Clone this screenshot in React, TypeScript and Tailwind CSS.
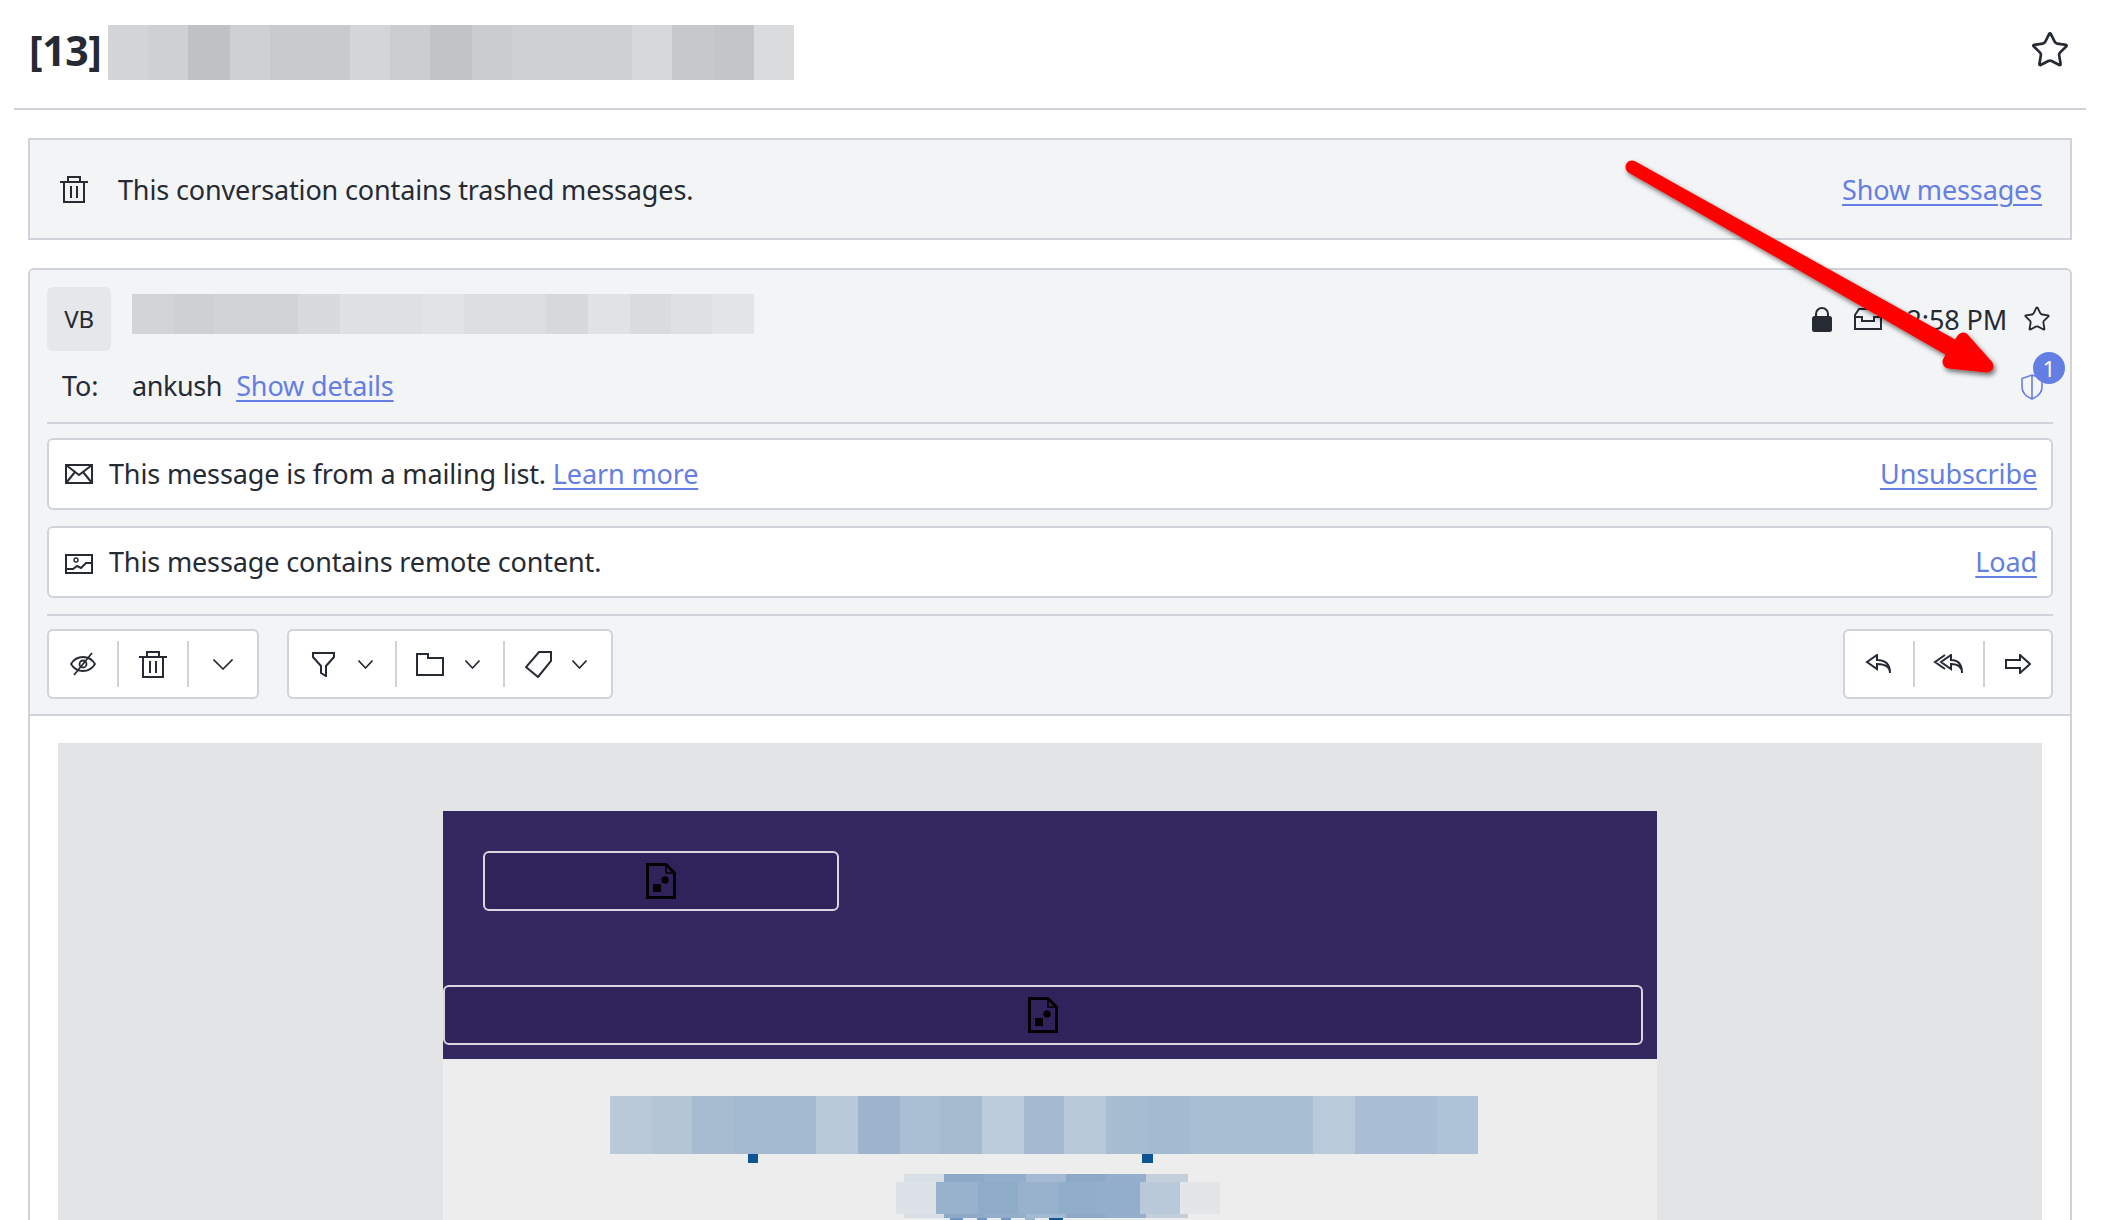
import React from "react";
import { Star } from "lucide-react";

type Seg = [number, string];

const TITLE_SEGS: Seg[] = [
  [40, "#d3d4d6"], [40, "#cfd0d2"], [42, "#c0c1c5"], [40, "#cfd0d2"], [80, "#c9cacc"], [40, "#d4d5d7"], [40, "#cccdcf"],
  [42, "#c2c3c7"], [40, "#cbcccd"], [120, "#cfd0d2"], [40, "#d7d8da"], [42, "#c7c8ca"], [40, "#c4c5c7"], [40, "#dadbdd"],
];
const SENDER_SEGS: Seg[] = [
  [42, "#d3d4d8"], [40, "#cfd0d3"], [84, "#d2d3d7"], [42, "#d9dade"], [82, "#dfe0e4"], [42, "#e2e3e7"],
  [82, "#dcdde1"], [42, "#d7d8dc"], [42, "#e1e2e6"], [41, "#dadbdf"], [41, "#dfe0e4"], [42, "#e3e4e7"],
];
const LINE_SEGS: Seg[] = [
  [42, "#b9c9d9"], [40, "#b3c6d6"], [43, "#a7bcd1"], [81, "#a3b9d0"], [42, "#b8c9d9"], [42, "#9eb4cc"], [40, "#aabfd3"],
  [42, "#a7bbd0"], [42, "#bdccda"], [40, "#a5bad0"], [42, "#b8c9d9"], [42, "#a7bdd2"], [42, "#a3bad0"], [123, "#a8bed3"],
  [42, "#b9cada"], [82, "#a9bed4"], [41, "#aec3d8"],
];
const OUTER_SEGS: Seg[] = [
  [40, "#d8dfe7"], [40, "#8ca9c7"], [42, "#93aecb"], [40, "#a3bad2"], [40, "#8ea9c7"], [40, "#94aecb"], [42, "#c3d0dc"],
];
const INNER_SEGS: Seg[] = [
  [40, "#dce2e8"], [42, "#98b1cc"], [40, "#8eacc8"], [40, "#98b2cd"], [40, "#90adc9"], [42, "#93aeca"], [40, "#b9c9d9"], [40, "#e3e5e9"],
];

const FONT = "font-['Noto_Sans',sans-serif]";

function Blur({ segs, className }: { segs: Seg[]; className: string }) {
  return (
    <div className={`flex ${className}`}>
      {segs.map(([w, c], i) => (
        <div key={i} style={{ width: w, backgroundColor: c }} />
      ))}
    </div>
  );
}

function A({ children }: { children: React.ReactNode }) {
  return <a className="text-[#657ee4] underline decoration-2 underline-offset-[4px]">{children}</a>;
}

const TrashIcon = () => (
  <svg width="28" height="27" viewBox="0 0 28 27" fill="none" stroke="#262a33" strokeWidth="2" className="shrink-0">
    <path d="M0 6h28M8 6V1h12v5M4 6V26h20V6M11 10v12M17 10v12" />
  </svg>
);

function Chevron({ w = 15, h = 9 }: { w?: number; h?: number }) {
  return (
    <svg width={w} height={h} viewBox={`0 0 ${w} ${h}`} fill="none" stroke="#262a33" strokeWidth="1.6" className="shrink-0">
      <path d={`M0.5 0.5 ${w / 2} ${h - 1} ${w - 0.5} 0.5`} />
    </svg>
  );
}

function BrokenImage() {
  return (
    <svg width="30" height="36" viewBox="0 0 30 36" fill="none" className="shrink-0">
      <path d="M1.5 1.5H20L28.5 10V34.5H1.5Z" stroke="#000" strokeWidth="3" />
      <path d="M20 1.5V10H28.5" stroke="#000" strokeWidth="1.5" />
      <rect x="7" y="21" width="8" height="8" fill="#000" />
      <ellipse cx="19" cy="17" rx="3.6" ry="3.8" fill="#000" />
    </svg>
  );
}

function Sep() {
  return <div className="w-[2px] h-[46px] bg-[#d1d3da] shrink-0" />;
}

function Banner({ icon, text, link, action, className }: { icon: React.ReactNode; text: string; link?: string; action: string; className?: string }) {
  return (
    <div className={`h-[72px] flex items-center bg-white border-2 border-[#d1d3da] rounded-[6px] pl-[16px] pr-[14px] ${className ?? ""}`}>
      {icon}
      <span className="ml-[16px] -mt-[2px]">
        {text} {link && <A>{link}</A>}
      </span>
      <span className="ml-auto -mt-[2px]">
        <A>{action}</A>
      </span>
    </div>
  );
}

function Arrow() {
  return (
    <svg width="2102" height="1220" className="absolute inset-0 pointer-events-none">
      <defs>
        <filter id="sh" x="-10%" y="-10%" width="120%" height="120%">
          <feDropShadow dx="2" dy="3" stdDeviation="2.5" floodColor="#000" floodOpacity="0.55" />
        </filter>
      </defs>
      <path
        d="M1632 167 L1957 348 L1963 339 L1987 366 L1949 362 L1954 352 Z"
        fill="#ff0000"
        stroke="#ff0000"
        strokeWidth="13"
        strokeLinejoin="round"
        filter="url(#sh)"
      />
    </svg>
  );
}

export default function App() {
  return (
    <div className={`relative w-[2102px] h-[1220px] overflow-hidden bg-white text-[#262a33] text-[27px] tracking-[-0.14px] leading-none ${FONT}`}>
      <header className="ml-[14px] mr-[16px] h-[110px] border-b-2 border-[#d1d3da] flex items-start pl-[15px] pr-[16px] pt-[25px]">
        <h1 className="w-[79px] text-[41px] tracking-[-0.4px] font-bold h-[50px] flex items-center whitespace-nowrap">[13]</h1>
        <Blur segs={TITLE_SEGS} className="h-[55px]" />
        <Star size={40} strokeWidth={1.6} className="ml-auto mt-[5px] text-[#262a33]" />
      </header>

      <main className="pl-[28px] pr-[30px] pt-[28px]">
        <div className="h-[102px] flex items-center bg-[#f2f4f6] border-2 border-[#d1d3da] pl-[30px] pr-[28px]">
          <TrashIcon />
          <span className="ml-[30px]">This conversation contains trashed messages.</span>
          <span className="ml-auto">
            <A>Show messages</A>
          </span>
        </div>

        <article className="mt-[28px] border-2 border-[#d1d3da] rounded-[6px] overflow-hidden">
          <div className="bg-[#f2f4f6] border-b-2 border-[#d1d3da]">
            <div className="px-[17px] pt-[17px]">
              <div className="flex h-[64px]">
                <div className="w-[64px] h-[64px] rounded-[6px] bg-[#e5e7eb] flex items-center justify-center text-[24px]">VB</div>
                <Blur segs={SENDER_SEGS} className="ml-[21px] mt-[7px] h-[40px]" />
                <div className="ml-auto flex items-center h-[64px] pr-[2px]">
                  <svg width="20" height="26" viewBox="0 0 20 26" fill="none" className="shrink-0">
                    <path d="M4 11V8a6 6 0 0 1 12 0v3" stroke="#262a33" strokeWidth="2" />
                    <rect x="0" y="10" width="20" height="16" rx="2.5" fill="#262a33" />
                  </svg>
                  <svg width="28" height="22" viewBox="0 0 28 22" fill="none" stroke="#262a33" strokeWidth="2" className="shrink-0 ml-[22px]">
                    <path d="M1 21V7L5 1H23L27 7V21ZM1 9H8V13H20V9H27" />
                  </svg>
                  <span className="ml-[25px]">2:58 PM</span>
                  <Star size={28} strokeWidth={1.6} className="ml-[16px]" />
                </div>
              </div>
              <div className="h-[73px] flex items-center border-b-2 border-[#d1d3da]">
                <span className="w-[85px] pl-[15px] -mt-[2px]">To:</span>
                <span className="-mt-[2px] tracking-[-0.4px]">ankush</span>
                <span className="ml-[14px] -mt-[2px]">
                  <A>Show details</A>
                </span>
                <div className="relative ml-auto mr-[10px] w-[22px] h-[26px]">
                  <svg width="22" height="26" viewBox="0 0 22 26" fill="none" stroke="#657ee4" strokeWidth="1.6">
                    <path d="M11 1 L21 4.5 V13 C21 19 16 23 11 25 C6 23 1 19 1 13 V4.5 Z M11 1 V25" />
                  </svg>
                  <div className="absolute -top-[22px] left-[12px] w-[32px] h-[32px] rounded-full bg-[#657ee4] text-white text-[22px] flex items-center justify-center">1</div>
                </div>
              </div>

              <Banner
                className="mt-[14px]"
                icon={
                  <svg width="28" height="20" viewBox="0 0 28 20" fill="none" stroke="#262a33" strokeWidth="2" className="shrink-0">
                    <path d="M1 1H27V19H1ZM1 1 14 11 27 1M1 19 10 8M27 19 18 8" />
                  </svg>
                }
                text="This message is from a mailing list."
                link="Learn more"
                action="Unsubscribe"
              />
              <Banner
                className="mt-[16px]"
                icon={
                  <svg width="28" height="20" viewBox="0 0 28 20" fill="none" stroke="#262a33" strokeWidth="2" className="shrink-0 mt-[4px]">
                    <path d="M1 1H27V19H1ZM1 15H8L12 12 16 14 21 9H27" />
                    <circle cx="11" cy="6" r="2" strokeWidth="1.4" />
                  </svg>
                }
                text="This message contains remote content."
                action="Load"
              />

              <div className="mt-[16px] border-t-2 border-[#d1d3da] pt-[13px] pb-[15px] flex">
                <div className="h-[70px] flex items-center bg-white border-2 border-[#d1d3da] rounded-[6px]">
                  <div className="w-[68px] flex justify-center">
                    <svg width="26" height="24" viewBox="0 0 26 24" fill="none" stroke="#262a33" strokeWidth="1.8">
                      <path d="M1 12C4 7 8 5 13 5s9 2 12 7c-3 5-7 7-12 7S4 17 1 12Z" />
                      <circle cx="13" cy="12" r="3.5" />
                      <path d="M22 1 4 23" />
                    </svg>
                  </div>
                  <Sep />
                  <div className="w-[68px] flex justify-center">
                    <TrashIcon />
                  </div>
                  <Sep />
                  <div className="w-[68px] flex justify-center">
                    <Chevron w={20} h={11} />
                  </div>
                </div>

                <div className="ml-[28px] h-[70px] flex items-center bg-white border-2 border-[#d1d3da] rounded-[6px]">
                  <div className="w-[106px] flex items-center pl-[23px] gap-[23px]">
                    <svg width="23" height="25" viewBox="0 0 23 25" fill="none" stroke="#262a33" strokeWidth="2" className="shrink-0">
                      <path d="M1 1H22V5L14 14V24L9 21V14L1 5Z" />
                    </svg>
                    <Chevron />
                  </div>
                  <Sep />
                  <div className="w-[106px] flex items-center pl-[19px] gap-[21px]">
                    <svg width="28" height="23" viewBox="0 0 28 23" fill="none" stroke="#262a33" strokeWidth="2" className="shrink-0">
                      <path d="M1 1H12V5H27V22H1Z" />
                    </svg>
                    <Chevron />
                  </div>
                  <Sep />
                  <div className="w-[106px] flex items-center pl-[20px] gap-[20px]">
                    <svg width="27" height="28" viewBox="0 0 27 28" fill="none" stroke="#262a33" strokeWidth="2" className="shrink-0">
                      <path d="M14 2H26V11L13 27 1 17Z" />
                    </svg>
                    <Chevron />
                  </div>
                </div>

                <div className="ml-auto h-[70px] flex items-center bg-white border-2 border-[#d1d3da] rounded-[6px]">
                  <div className="w-[68px] flex justify-center pr-[3px]">
                    <svg width="26" height="20" viewBox="0 0 26 20" fill="none" stroke="#262a33" strokeWidth="2">
                      <path d="M25 19C25 13 21 10 12 10V15L2 8 12 1V6C20 6 25 10 25 19Z" />
                    </svg>
                  </div>
                  <Sep />
                  <div className="w-[68px] flex justify-center pr-[3px]">
                    <svg width="30" height="20" viewBox="0 0 30 20" fill="none" stroke="#262a33" strokeWidth="2">
                      <path d="M29 19C29 13 25 10 18 10V15L8 8 18 1V6C25 6 29 10 29 19ZM12 1 2 8 12 15" />
                    </svg>
                  </div>
                  <Sep />
                  <div className="w-[66px] flex justify-center">
                    <svg width="26" height="20" viewBox="0 0 26 20" fill="none" stroke="#262a33" strokeWidth="2">
                      <path d="M1 6H15V1L25 10 15 19V14H1Z" />
                    </svg>
                  </div>
                </div>
              </div>
            </div>
          </div>

          <div className="bg-white pt-[27px] pl-[28px] pr-[28px]">
            <div className="bg-[#e3e4e6] pt-[68px] px-[385px] h-[600px]">
              <div className="h-[248px] bg-[#342860] pt-[40px] pl-[40px]">
                <div className="w-[356px] h-[60px] bg-[#30225a] border-2 border-[#d9d6e0] rounded-[6px] flex items-center justify-center">
                  <BrokenImage />
                </div>
                <div className="mt-[74px] -ml-[40px] w-[1200px] h-[60px] bg-[#30225a] border-2 border-[#d9d6e0] rounded-[6px] flex items-center justify-center">
                  <BrokenImage />
                </div>
              </div>
              <div className="bg-[#ededed] h-[300px] pt-[37px] pl-[167px]">
                <Blur segs={LINE_SEGS} className="h-[58px]" />
                <div className="flex h-[9px]">
                  <div className="ml-[138px] w-[10px] bg-[#0b5596]" />
                  <div className="ml-[384px] w-[11px] bg-[#0b5596]" />
                </div>
                <div className="relative ml-[294px] mt-[11px] w-[284px] h-[44px]">
                  <Blur segs={OUTER_SEGS} className="h-[44px]" />
                  <Blur segs={INNER_SEGS} className="absolute top-[8px] -left-[8px] h-[32px]" />
                </div>
                <div className="ml-[340px] flex h-[2px] gap-[14px]">
                  <div className="w-[13px] bg-[#6f97c0]" />
                  <div className="w-[10px] bg-[#6f97c0]" />
                  <div className="w-[10px] bg-[#6f97c0]" />
                  <div className="w-[10px] bg-[#9db6cf]" />
                  <div className="w-[14px] bg-[#0b5596]" />
                </div>
              </div>
            </div>
          </div>
        </article>
      </main>

      <Arrow />
    </div>
  );
}
